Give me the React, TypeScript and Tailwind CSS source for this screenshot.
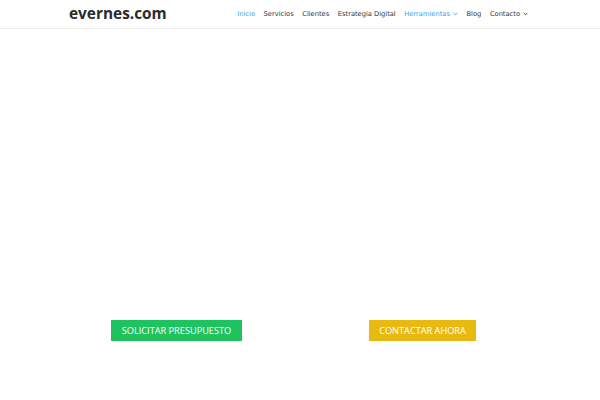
import React from "react";

function Chevron() {
  return (
    <svg width="5" height="4" viewBox="0 0 5 4" className="ml-[3px] inline-block">
      <path d="M0.7 1 L2.5 2.8 L4.3 1" fill="none" stroke="currentColor" strokeWidth="0.9" />
    </svg>
  );
}

export default function App() {
  const font = { fontFamily: '"Open Sans", "Liberation Sans", sans-serif' };
  const navFont = { fontFamily: '"DejaVu Sans", "Liberation Sans", sans-serif' };
  return (
    <div className="w-[600px] h-[400px] bg-white overflow-hidden" style={font}>
      <header className="h-[29px] border-b border-[#ececec] flex items-center">
        <div className="w-[460px] mx-auto flex items-center justify-between">
          <div className="text-[15.4px] font-bold text-[#2b2b2b] leading-none -mt-[1px] ml-[-1px]">
            evernes.com
          </div>
          <nav
            className="flex items-center gap-[8.6px] text-[6.7px] text-[#333] leading-none mr-[2px]"
            style={navFont}
          >
            <span className="text-[#2ea3f2]">Inicio</span>
            <span>Servicios</span>
            <span>Clientes</span>
            <span>Estrategia Digital</span>
            <span className="text-[#2ea3f2] flex items-center">Herramientas<Chevron /></span>
            <span>Blog</span>
            <span className="flex items-center">Contacto<Chevron /></span>
          </nav>
        </div>
      </header>
      <div className="pt-[291px] flex items-start pl-[111px]">
        <div className="w-[131px] h-[21px] bg-[#1ec25f] text-white text-[9.2px] flex items-center justify-center">
          SOLICITAR PRESUPUESTO
        </div>
        <div className="ml-[127px] w-[107px] h-[21px] bg-[#e8b90f] text-white text-[9.2px] flex items-center justify-center">
          CONTACTAR AHORA
        </div>
      </div>
    </div>
  );
}
